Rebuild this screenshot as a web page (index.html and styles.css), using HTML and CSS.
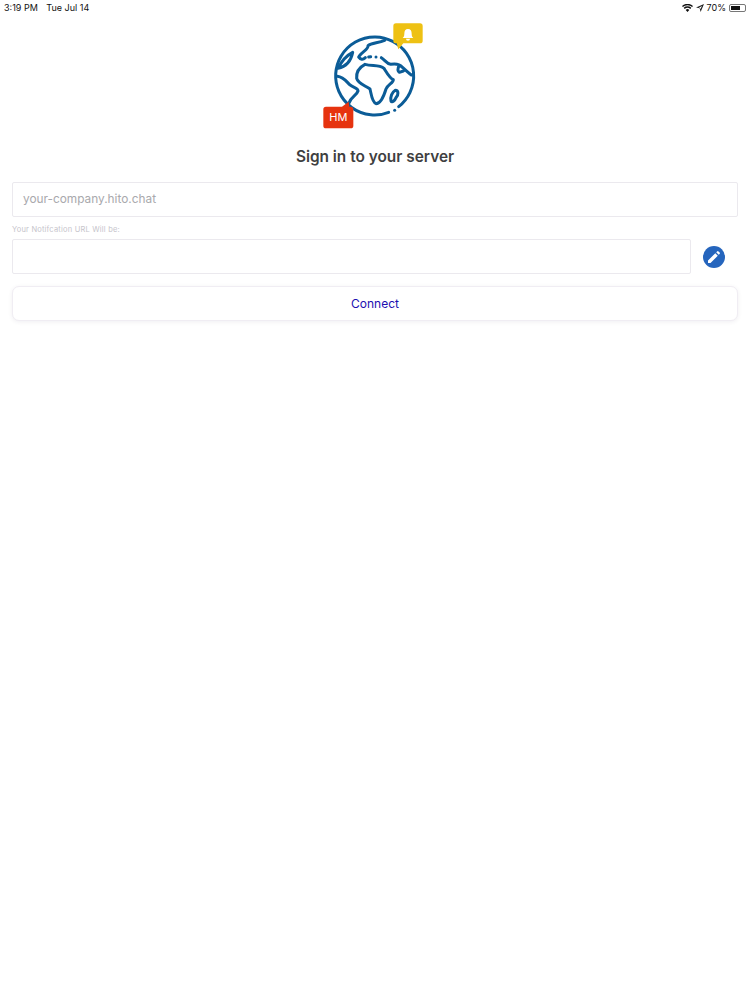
FILE: index.html
```html
<!DOCTYPE html>
<html lang="en">
<head>
<meta charset="utf-8">
<title>Sign in to your server</title>
<link rel="stylesheet" href="styles.css">
</head>
<body>
<div class="status-bar">
  <div class="status-left"><span>3:19 PM</span><span>Tue Jul 14</span></div>
  <div class="status-right">
    <svg class="wifi" width="11" height="8" viewBox="0 0 11 8"><path d="M5.500 8 3.700 5.900a2.700 2.700 0 0 1 3.600 0zM2.700 4.900 1.700 3.800a5.600 5.600 0 0 1 7.600 0l-1 1.100a4.200 4.200 0 0 0-5.600 0zM.9 3 0 2a8 8 0 0 1 11 0l-.9 1a6.700 6.700 0 0 0-9.200 0z" fill="#111"/></svg>
    <svg class="arrow" width="8" height="8" viewBox="0 0 8 8"><path d="M8 0 0 3.400l3.700.8.900 3.800zM6 2 4.300 5.300 4 4 2.700 3.700z" fill="#222"/></svg>
    <span>70%</span>
    <div class="battery"><div class="battery-level"></div></div>
  </div>
</div>
<main class="page">
  <svg class="logo" width="130" height="120" viewBox="0 0 390 360">
    <g fill="none" stroke="#0b5c97" stroke-width="9" stroke-linecap="round" stroke-linejoin="round">
      <path d="M236 292 A117 117 0 1 1 266 275"/>
      <path d="M84 160 C94 140 108 122 128 112 C124 132 112 154 84 160z"/>
      <path d="M224 76 C204 84 184 84 174 92 C176 104 152 112 146 126 C152 134 158 136 166 128"/>
      <path d="M176 126 L182 125 M214 128 C224 134 230 146 242 148 C254 146 268 146 276 156 C286 164 296 174 304 180 M268 150 C264 158 262 168 268 172 L280 168"/>
      <path d="M165 148 C150 156 138 170 140 190 C144 206 166 212 180 222 C184 238 186 262 198 266 C212 266 222 242 228 222 C234 208 250 204 250 194 C240 190 232 176 222 160 C208 148 188 154 165 148z"/>
      <path d="M82 184 C100 186 108 198 118 208 C128 218 146 218 144 228 C140 242 122 246 117 264"/>
      <path d="M256 226 C266 226 266 240 258 248 C254 258 246 264 243 258 C240 246 246 232 256 226z"/>
    </g>
    <circle cx="198" cy="126" r="4.500" fill="#0b5c97"/>
    <circle cx="254" cy="286" r="4.500" fill="#0b5c97"/>
    <path d="M258 25h72a8 8 0 0 1 8 8v44a8 8 0 0 1-8 8h-50l-15 18-5-18h-2a8 8 0 0 1-8-8V33a8 8 0 0 1 8-8z" fill="#eec113"/>
    <path d="M294 42c8 0 11 6 11 14 0 7 2 10 5 13h-32c3-3 5-6 5-13 0-8 3-14 11-14zM288 71h12a6 6 0 0 1-12 0z" fill="#fff"/>
    <path d="M48 275h48l20-15 2 15h4a8 8 0 0 1 8 8v49a8 8 0 0 1-8 8H48a8 8 0 0 1-8-8v-49a8 8 0 0 1 8-8z" fill="#e6330f"/>
    <text x="85" y="318" class="logo-text">HM</text>
  </svg>
  <h1 class="title">Sign in to your server</h1>
  <div class="field placeholder">your-company.hito.chat</div>
  <div class="label">Your Notifcation URL Will be:</div>
  <div class="url-row">
    <div class="field url-field"></div>
    <button class="edit" aria-label="Edit">
      <svg width="12" height="12" viewBox="0 0 12 12"><path d="M0 12V9.500L7.300 2.200 9.800 4.700 2.500 12zM8.200 1.300 9.100.4a1 1 0 0 1 1.400 0l1.100 1.100a1 1 0 0 1 0 1.400l-.9.900z" fill="#fff"/></svg>
    </button>
  </div>
  <button class="connect">Connect</button>
</main>
</body>
</html>
```

FILE: styles.css
```css
* {
  box-sizing: border-box;
}

html, body {
  margin: 0;
  height: 100%;
  background: #fff;
}

body {
  font-family: Inter, "Liberation Sans", sans-serif;
  color: #3c3c3e;
}

.status-bar {
  height: 15px;
  padding: 0 4px;
  display: flex;
  justify-content: space-between;
  align-items: center;
  font-size: 9px;
  color: #111;
}

.status-left {
  display: flex;
  gap: 8.500px;
}

.status-right {
  display: flex;
  align-items: center;
  gap: 3px;
}

.battery {
  width: 17px;
  height: 8px;
  border: 1px solid #777;
  border-radius: 2px;
  padding: 1px;
}

.battery-level {
  width: 70%;
  height: 100%;
  background: #111;
}

.page {
  padding: 0 12px;
  display: flex;
  flex-direction: column;
  align-items: center;
}

.logo {
  display: block;
}

.logo-text {
  font-family: Inter, "Liberation Sans", sans-serif;
  font-size: 33px;
  fill: #fff;
  text-anchor: middle;
}

.title {
  margin: 12px 0 15px;
  font-size: 15.400px;
  line-height: 20px;
  font-weight: 600;
  color: #3f3f41;
}

.field {
  width: 100%;
  height: 35px;
  border: 1px solid #ebe9ee;
  border-radius: 2px;
  padding: 0 10px 1px;
  display: flex;
  align-items: center;
  background: #fff;
}

.placeholder {
  font-size: 11.850px;
  color: #a9a9ad;
}

.label {
  align-self: flex-start;
  margin-top: 8px;
  height: 14px;
  line-height: 10px;
  font-size: 7.500px;
  letter-spacing: 0.2px;
  color: #c6c4cb;
}

.url-row {
  width: 100%;
  display: flex;
  align-items: center;
  gap: 12px;
}

.url-field {
  flex: 1;
  width: auto;
}

.edit {
  width: 22px;
  height: 22px;
  margin-right: 13px;
  border: 0;
  border-radius: 50%;
  padding: 0;
  display: flex;
  align-items: center;
  justify-content: center;
  background: #2565bd;
}

.connect {
  width: 100%;
  height: 35px;
  margin-top: 12px;
  border: 1px solid #f0edf3;
  border-radius: 7px;
  background: #fff;
  box-shadow: 0 1px 4px rgba(60, 50, 90, 0.08);
  font-family: inherit;
  font-size: 12px;
  color: #1c0fb0;
}
```
